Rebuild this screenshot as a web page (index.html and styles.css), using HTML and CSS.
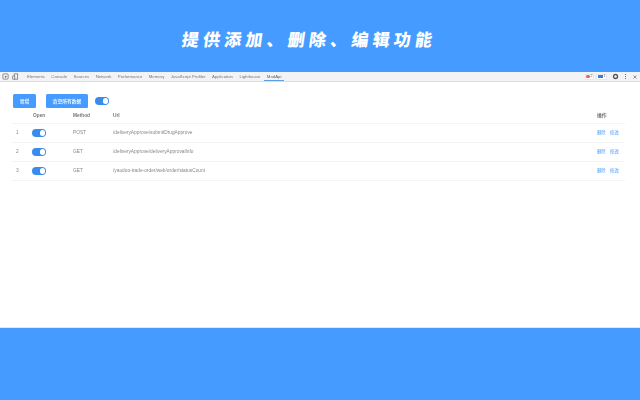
FILE: index.html
```html
<!DOCTYPE html>
<html lang="zh">
<head>
<meta charset="utf-8">
<title>ModApi</title>
<link rel="stylesheet" href="styles.css">
</head>
<body>
<header class="hero"><h1>提供添加、删除、编辑功能</h1></header>
<main class="panel">
  <nav class="toolbar">
    <svg class="tool-icon" viewBox="0 0 8 8"><rect x="1" y="1" width="6" height="6" rx="1" fill="none" stroke="#666" stroke-width=".8"/><path d="M3 3l3 1.2-1.2.5L4.300 6z" fill="#555"/></svg>
    <svg class="tool-icon" viewBox="0 0 8 8"><rect x="2.500" y="1" width="4" height="6" fill="none" stroke="#666" stroke-width=".8"/><rect x=".8" y="3.500" width="2.400" height="3.500" fill="#eee" stroke="#666" stroke-width=".7"/></svg>
    <div class="tabs">
      <span class="tab">Elements</span>
      <span class="tab">Console</span>
      <span class="tab">Sources</span>
      <span class="tab">Network</span>
      <span class="tab">Performance</span>
      <span class="tab">Memory</span>
      <span class="tab">JavaScript Profiler</span>
      <span class="tab">Application</span>
      <span class="tab">Lighthouse</span>
      <span class="tab active">ModApi</span>
    </div>
    <div class="status">
      <span class="badge"><i class="dot"></i>2</span>
      <span class="badge"><i class="msg"></i>1</span>
      <svg class="gear" viewBox="0 0 8 8"><circle cx="4" cy="4" r="2.300" fill="none" stroke="#555" stroke-width="1.500"/></svg>
      <span class="more"><i></i><i></i><i></i></span>
      <svg class="close" viewBox="0 0 8 8"><path d="M2 2l4 4M6 2l-4 4" stroke="#666" stroke-width=".9"/></svg>
    </div>
  </nav>
  <section class="content">
    <div class="actions">
      <button class="btn add">新增</button>
      <button class="btn clear">清空所有数据</button>
      <span class="switch"></span>
    </div>
    <div class="row head">
      <span></span><span>Open</span><span>Method</span><span>Url</span><span>操作</span>
    </div>
    <div class="row">
      <span>1</span><span><i class="switch"></i></span><span>POST</span><span>/deliveryApprove/submitDrugApprove</span>
      <span class="links"><a>删除</a><a>修改</a></span>
    </div>
    <div class="row">
      <span>2</span><span><i class="switch"></i></span><span>GET</span><span>/deliveryApprove/deliveryApprovalInfo</span>
      <span class="links"><a>删除</a><a>修改</a></span>
    </div>
    <div class="row">
      <span>3</span><span><i class="switch"></i></span><span>GET</span><span>/yaudoo-trade-order/web/order/statusCount</span>
      <span class="links"><a>删除</a><a>修改</a></span>
    </div>
  </section>
</main>
<footer class="foot"></footer>
</body>
</html>
```
FILE: styles.css
```css
* { box-sizing: border-box; }
html, body { margin: 0; height: 400px; overflow: hidden; }
body {
  background: #459bff;
  font-family: "Noto Sans CJK SC", "Liberation Sans", sans-serif;
  display: flex;
  flex-direction: column;
}
.hero {
  height: 72px;
  display: flex;
  align-items: center;
  justify-content: center;
  flex: none;
  padding-right: 22px;
}
.hero h1 {
  margin: 0 0 -6px 0;
  padding-bottom: 2px;
  color: #fff;
  font: 900 17px/1 "Noto Sans CJK SC", sans-serif;
  letter-spacing: 4.200px;
  transform: skewX(-8deg);
}
.panel {
  height: 256px;
  flex: none;
  background: #fff;
  border-bottom: 1px solid #f3e4cc;
  display: flex;
  flex-direction: column;
}
.toolbar {
  height: 9px;
  flex: none;
  background: #f2f3f4;
  border-bottom: 1px solid #dcdfe2;
  display: flex;
  align-items: center;
  padding-left: 2px;
  gap: 3px;
  box-sizing: content-box;
  filter: blur(.35px);
}
.tool-icon { width: 7px; height: 7px; display: block; }
.tabs {
  display: flex;
  flex: 1;
  height: 100%;
  margin-left: 5px;
  gap: 6.400px;
  font: 4.300px/9px "Liberation Sans", sans-serif;
  color: #777;
}
.tab { white-space: nowrap; }
.active {
  margin-left: -3px;
  padding: 0 3px;
  color: #666;
  height: 9px;
  border-bottom: 1px solid #5b9fe6;
}
.status { display: flex; align-items: center; gap: 2px; padding-right: 2px; }
.badge {
  display: flex;
  align-items: center;
  gap: 1px;
  height: 6px;
  padding: 0 .5px;
  background: #fff;
  border: 1px solid #e6e8ea;
  font: 3.500px/1 "Liberation Sans", sans-serif;
  color: #666;
}
.dot { width: 3.500px; height: 3.500px; border-radius: 50%; background: #e35d6a; }
.msg { width: 5px; height: 3.500px; background: #3c7fd9; }
.gear { width: 7px; height: 7px; display: block; margin-left: 3px; }
.more { display: flex; flex-direction: column; gap: 1px; margin-left: 3.500px; }
.more i { width: 1px; height: 1px; background: #777; display: block; }
.close { width: 6px; height: 6px; display: block; margin-left: 4.500px; }
.content {
  padding: 12px 0 0 12px;
  width: 625px;
  filter: blur(.4px);
}
.actions { display: flex; align-items: center; height: 14px; padding-left: 1px; }
.btn {
  border: 0;
  padding: 0;
  height: 14px;
  background: #459bff;
  color: #fff;
  border-radius: 1.500px;
  font: 500 4.800px/14px "Noto Sans CJK SC", sans-serif;
}
.add { width: 23px; margin-right: 10px; }
.clear { width: 42px; margin-right: 7px; }
.switch {
  display: block;
  position: relative;
  width: 14px;
  height: 7.500px;
  border-radius: 4px;
  background: #3a8bee;
}
.switch::after {
  content: "";
  position: absolute;
  right: 1px;
  top: 1px;
  width: 5.500px;
  height: 5.500px;
  border-radius: 50%;
  background: #fff;
}
.row {
  display: grid;
  grid-template-columns: 20px 41px 40px 484px 1fr;
  align-items: center;
  height: 19px;
  border-bottom: 1px solid #f3f4f6;
  font: 4.800px/1 "Liberation Sans", "Noto Sans CJK SC", sans-serif;
  color: #888;
  white-space: nowrap;
}
.row > span:first-child { padding-left: 4px; }
.head {
  height: 16px;
  font-weight: 700;
  color: #777;
  padding-top: 1px;
}
.head > span:nth-child(2) { padding-left: 1px; }
.links {
  display: flex;
  gap: 4.500px;
  margin-bottom: 2px;
  color: #6db0fb;
  font: 500 4.300px/1 "Noto Sans CJK SC", sans-serif;
}
```
